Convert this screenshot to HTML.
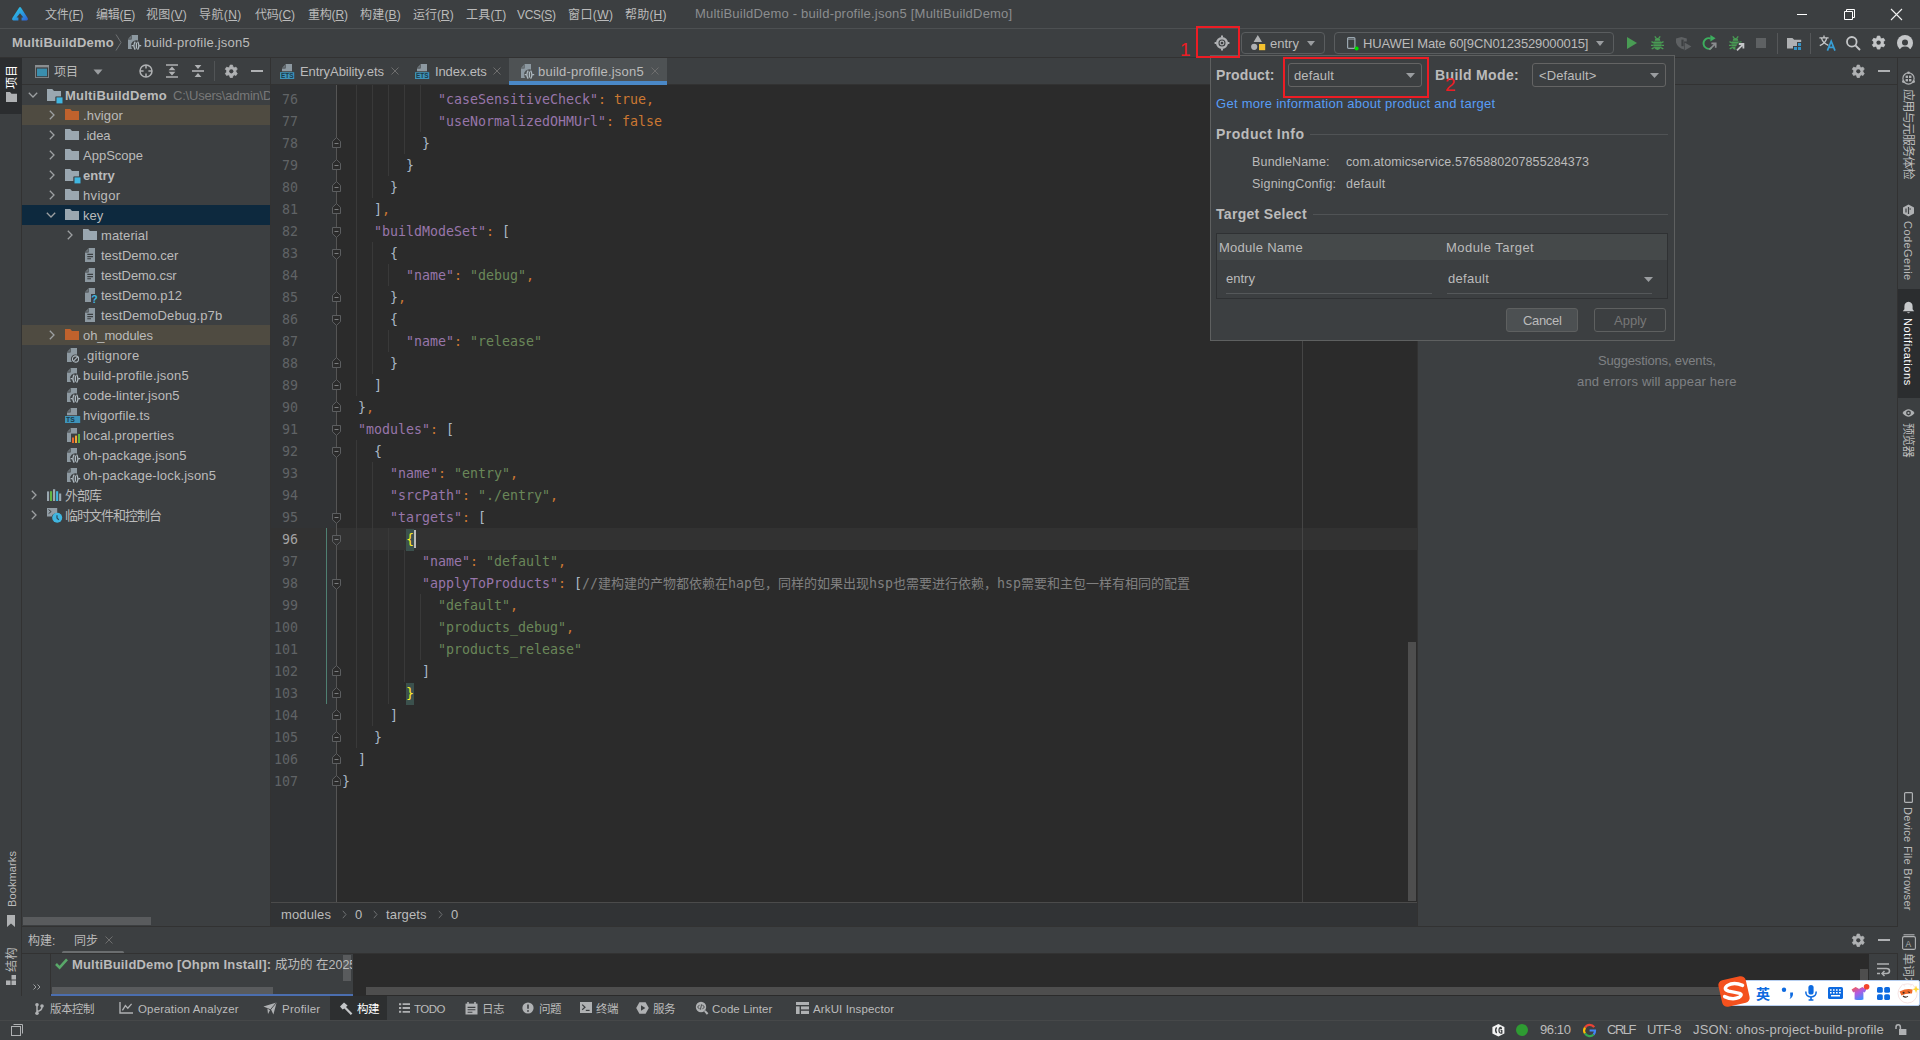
<!DOCTYPE html>
<html lang="zh"><head><meta charset="utf-8"><title>MultiBuildDemo - build-profile.json5</title>
<style>
*{box-sizing:border-box;margin:0;padding:0}
html,body{width:1920px;height:1040px;overflow:hidden;background:#3c3f41}
body{position:relative;font-family:"Liberation Sans","Noto Sans CJK SC",sans-serif;font-size:12px;color:#bbbbbb}
.a{position:absolute}
.t{position:absolute;white-space:pre;height:20px;line-height:20px}
.b{font-weight:bold}
svg{position:absolute;overflow:visible}
.code{position:absolute;white-space:pre;font-family:"DejaVu Sans Mono","Liberation Mono","Noto Sans CJK SC",monospace;font-size:13.29px;height:22px;line-height:22px;color:#a9b7c6}
.k{color:#9876aa}.s{color:#6a8759}.o{color:#cc7832}.c{color:#808080}
.cj{font-size:13px}
.ln{position:absolute;font-family:"DejaVu Sans Mono","Liberation Mono",monospace;font-size:13.29px;height:22px;line-height:22px;color:#606366;text-align:right;width:40px}
.vt{position:absolute;white-space:pre;height:20px;line-height:20px;transform-origin:0 0}
</style></head><body>
<div class="a" style="left:0px;top:0px;width:1920px;height:28px;background:#3c3f41;"></div>
<div class="a" style="left:0px;top:28px;width:1920px;height:1px;background:#4d5052;"></div>
<svg style="left:12px;top:7px" width="16" height="14" viewBox="0 0 16 14"><defs><linearGradient id="lg1" x1="0" y1="0" x2="1" y2="1"><stop offset="0" stop-color="#35d6e8"></stop><stop offset="0.55" stop-color="#2a9be0"></stop><stop offset="1" stop-color="#2f5fd8"></stop></linearGradient></defs><path d="M7.2 0.6 Q8 -0.4 8.9 0.6 L15.8 11.2 Q16.4 13.4 14.4 13.4 L9.6 13.4 L9.6 10.4 L11.4 10.4 L8 6.2 L4.6 10.4 L6.4 10.4 L6.4 13.4 L1.6 13.4 Q-0.4 13.4 0.2 11.2 Z" fill="url(#lg1)"></path></svg>
<span class="t" style="left: 45px; top: 5px; font-size: 12px; color: rgb(187, 187, 187); letter-spacing: -0.2px;">文件(<u>F</u>)</span>
<span class="t" style="left: 96px; top: 5px; font-size: 12px; color: rgb(187, 187, 187); letter-spacing: -0.2px;">编辑(<u>E</u>)</span>
<span class="t" style="left: 146px; top: 5px; font-size: 12px; color: rgb(187, 187, 187); letter-spacing: 0.2px;">视图(<u>V</u>)</span>
<span class="t" style="left: 199px; top: 5px; font-size: 12px; color: rgb(187, 187, 187); letter-spacing: 0.4px;">导航(<u>N</u>)</span>
<span class="t" style="left: 255px; top: 5px; font-size: 12px; color: rgb(187, 187, 187); letter-spacing: -0.2px;">代码(<u>C</u>)</span>
<span class="t" style="left: 308px; top: 5px; font-size: 12px; color: rgb(187, 187, 187); letter-spacing: -0.2px;">重构(<u>R</u>)</span>
<span class="t" style="left: 360px; top: 5px; font-size: 12px; color: rgb(187, 187, 187); letter-spacing: 0.2px;">构建(<u>B</u>)</span>
<span class="t" style="left: 413px; top: 5px; font-size: 12px; color: rgb(187, 187, 187); letter-spacing: 0px;">运行(<u>R</u>)</span>
<span class="t" style="left: 466px; top: 5px; font-size: 12px; color: rgb(187, 187, 187); letter-spacing: 0.2px;">工具(<u>T</u>)</span>
<span class="t" style="left: 517px; top: 5px; font-size: 12px; color: rgb(187, 187, 187); letter-spacing: -0.333px;">VCS(<u>S</u>)</span>
<span class="t" style="left: 568px; top: 5px; font-size: 12px; color: rgb(187, 187, 187); letter-spacing: 0.4px;">窗口(<u>W</u>)</span>
<span class="t" style="left: 625px; top: 5px; font-size: 12px; color: rgb(187, 187, 187); letter-spacing: 0.2px;">帮助(<u>H</u>)</span>
<span class="t " style="left: 695px; top: 4px; font-size: 13px; color: rgb(139, 141, 143); letter-spacing: 0.208px;">MultiBuildDemo - build-profile.json5 [MultiBuildDemo]</span>
<svg style="left:1795px;top:5px" width="110" height="18" viewBox="0 0 110 18"><path d="M2 9.5 H12" stroke="#ffffff" stroke-width="1"></path><path d="M49.5 6.5 H57.5 V14.5 H49.5 Z M51.5 6.5 V4.5 H59.5 V12.5 H57.5" fill="none" stroke="#ffffff" stroke-width="1"></path><path d="M96 4 L107 15 M107 4 L96 15" stroke="#f0f0f0" stroke-width="1.1"></path></svg>
<div class="a" style="left:0px;top:29px;width:1920px;height:28px;background:#3c3f41;"></div>
<div class="a" style="left:0px;top:57px;width:1920px;height:1px;background:#323232;"></div>
<span class="t " style="left: 12px; top: 33px; font-size: 13px; color: rgb(187, 187, 187); font-weight: bold; letter-spacing: 0.214px;">MultiBuildDemo</span>
<svg style="left:115px;top:34px" width="8" height="17" viewBox="0 0 8 17"><path d="M1 0.5 L6 8.5 L1 16.5" fill="none" stroke="#6e7072" stroke-width="1"></path></svg>
<svg style="left:128px;top:35px" width="14" height="16" viewBox="0 0 14 16"><path d="M3.6 0 H10 V14 H0 V4.6 H3.6 Z" fill="#8d99a1"></path><path d="M0 3.8 L3 0.8 V3.8 Z" fill="#8d99a1" opacity="0.6"></path><ellipse cx="8.4" cy="10.6" rx="5.4" ry="5.4" fill="#3c3f41"></ellipse><path d="M7.2 6.6 Q4.6 10.6 7.2 14.6 M9.6 6.6 Q12.2 10.6 9.6 14.6" fill="none" stroke="#aeb9c0" stroke-width="1.3"></path><path d="M8.4 7.6 V13.6" stroke="#aeb9c0" stroke-width="1.3"></path><path d="M3.6 10.6 L5.6 10.6 M11.2 10.6 L13.2 10.6" stroke="#aeb9c0" stroke-width="1.3"></path></svg>
<span class="t " style="left: 144px; top: 33px; font-size: 13px; color: rgb(187, 187, 187); letter-spacing: 0.211px;">build-profile.json5</span>
<svg style="left:1214px;top:35px" width="16" height="16" viewBox="0 0 16 16"><circle cx="8" cy="8" r="4.8" fill="none" stroke="#afb1b3" stroke-width="2.5"></circle><circle cx="8" cy="8" r="1.9" fill="none" stroke="#afb1b3" stroke-width="1.1"></circle><path d="M8 0.6 V2.6 M8 13.4 V15.4 M0.6 8 H2.6 M13.4 8 H15.4" stroke="#afb1b3" stroke-width="2"></path></svg>
<div class="a" style="left:1241px;top:32px;width:84px;height:22px;background:#3c3f41;border:1px solid #5a5d5f;border-radius:4px"></div>
<svg style="left:1251px;top:35px" width="15" height="16" viewBox="0 0 15 16"><path d="M6.8 0 L11 7 H2.6 Z" fill="#afb1b3"></path><circle cx="3.2" cy="11.8" r="3.1" fill="#afb1b3"></circle><rect x="8" y="9" width="6.2" height="6.2" fill="#f4c12e"></rect></svg>
<span class="t " style="left: 1270px; top: 34px; font-size: 13px; color: rgb(187, 187, 187); letter-spacing: 0px;">entry</span>
<svg style="left:1307px;top:41px" width="8" height="5" viewBox="0 0 8 5"><path d="M0 0 H8 L4 5 Z" fill="#9a9da0"></path></svg>
<div class="a" style="left:1334px;top:32px;width:280px;height:22px;background:#3c3f41;border:1px solid #5a5d5f;border-radius:4px"></div>
<svg style="left:1347px;top:37px" width="12" height="14" viewBox="0 0 12 14"><rect x="0.6" y="0.6" width="7.3" height="10.8" rx="1" fill="#3c3f41" stroke="#9aa7b0" stroke-width="1.2"></rect><path d="M0.6 2.2 H8" stroke="#9aa7b0" stroke-width="0.8"></path><circle cx="9.6" cy="11.6" r="2" fill="#00dd00"></circle></svg>
<span class="t " style="left: 1363px; top: 34px; font-size: 13px; color: rgb(187, 187, 187); letter-spacing: -0.125px;">HUAWEI Mate 60[9CN0123529000015]</span>
<svg style="left:1596px;top:41px" width="8" height="5" viewBox="0 0 8 5"><path d="M0 0 H8 L4 5 Z" fill="#9a9da0"></path></svg>
<svg style="left:1627px;top:37px" width="10" height="12" viewBox="0 0 10 12"><path d="M0 0 L10 6 L0 12 Z" fill="#499c54"></path></svg>
<svg style="left:1650.5px;top:36px" width="13" height="14" viewBox="0 0 13 14"><path d="M3.8 0.3 L5.5 2.6 M9.2 0.3 L7.5 2.6" stroke="#499c54" stroke-width="1.3"></path><path d="M3.8 4.7 Q3.8 1.9 6.5 1.9 Q9.2 1.9 9.2 4.7 Z" fill="#499c54"></path><path d="M2.7 5.5 H10.3 Q11 9 10 11.6 Q8.6 13.9 6.5 13.9 Q4.4 13.9 3 11.6 Q2 9 2.7 5.5 Z" fill="#499c54"></path><path d="M2.8 6.9 L0.5 5.7 M2.5 9.3 H0 M3 11.6 L0.7 12.9 M10.2 6.9 L12.5 5.7 M10.5 9.3 H13 M10 11.6 L12.3 12.9" stroke="#499c54" stroke-width="1.3"></path><path d="M2.4 8 H10.6 M2.6 10.6 H10.4" stroke="#3c3f41" stroke-width="0.7" opacity="0.85"></path></svg>
<svg style="left:1676px;top:37px" width="16" height="14" viewBox="0 0 16 14"><path d="M0 1.6 L5.4 0 L10.8 1.6 V4.4 H8 V12.6 Q1.4 10.4 0 5.4 Z" fill="#5e6163"></path><rect x="5.4" y="2.6" width="2.2" height="6.6" fill="#3c3f41"></rect><path d="M8.6 5.4 L15.4 9.4 L8.6 13.6 Z" fill="#5e6163"></path></svg>
<svg style="left:1702px;top:35px" width="15" height="16" viewBox="0 0 15 16"><path d="M8.6 3.5 A5.3 5.3 0 1 0 9.6 13" fill="none" stroke="#3dae5e" stroke-width="1.9"></path><path d="M8.4 0 L13.6 3.3 L8.4 6.4 Z" fill="#3dae5e"></path><path d="M7.4 14.6 L13 9 M9.4 8.4 H13.7 V12.7" fill="none" stroke="#8a8d8f" stroke-width="1.7"></path></svg>
<svg style="left:1728.6px;top:36px" width="13" height="14" viewBox="0 0 13 14"><path d="M3.8 0.3 L5.5 2.6 M9.2 0.3 L7.5 2.6" stroke="#499c54" stroke-width="1.3"></path><path d="M3.8 4.7 Q3.8 1.9 6.5 1.9 Q9.2 1.9 9.2 4.7 Z" fill="#499c54"></path><path d="M2.7 5.5 H10.3 Q11 9 10 11.6 Q8.6 13.9 6.5 13.9 Q4.4 13.9 3 11.6 Q2 9 2.7 5.5 Z" fill="#499c54"></path><path d="M2.8 6.9 L0.5 5.7 M2.5 9.3 H0 M3 11.6 L0.7 12.9 M10.2 6.9 L12.5 5.7 M10.5 9.3 H13 M10 11.6 L12.3 12.9" stroke="#499c54" stroke-width="1.3"></path><path d="M2.4 8 H10.6 M2.6 10.6 H10.4" stroke="#3c3f41" stroke-width="0.7" opacity="0.85"></path></svg>
<svg style="left:1729px;top:36px" width="16" height="15" viewBox="0 0 16 15"><path d="M6.4 15 L6.4 11.4 L9.4 6.6 L16 6.6 L16 15 Z" fill="#3c3f41"></path><path d="M8 14.4 L13.8 8.6 M9.8 8 H14.4 V12.6" fill="none" stroke="#c4c6c8" stroke-width="1.8"></path></svg>
<div class="a" style="left:1756px;top:38px;width:10px;height:10px;background:#5e6163;"></div>
<div class="a" style="left:1777px;top:33px;width:1px;height:21px;background:#555759;"></div>
<svg style="left:1787px;top:38px" width="15" height="13" viewBox="0 0 15 13"><path d="M0 0 H5.4 L7.2 1.8 H14.2 V4 H10 V8 H6 V10.4 H0 Z" fill="#afb1b3"></path><rect x="11" y="5" width="3" height="3" fill="#3592c4"></rect><rect x="7" y="9" width="3" height="3" fill="#3592c4"></rect><rect x="11" y="9" width="3" height="3" fill="#3592c4"></rect></svg>
<div class="a" style="left:1810px;top:33px;width:1px;height:21px;background:#555759;"></div>
<svg style="left:1819px;top:35px" width="17" height="16" viewBox="0 0 17 16"><path d="M0.4 2.8 H9.6 M5 0.6 V2.8 M7.8 2.8 Q6.6 8 0.8 10.6 M2.4 2.8 Q3.8 8 9.4 10.4" fill="none" stroke="#c4c6c8" stroke-width="1.3"></path><path d="M8.4 15.6 L12.2 6.2 L16 15.6 M9.8 12.4 H14.6" fill="none" stroke="#389fd6" stroke-width="1.7"></path></svg>
<svg style="left:1845px;top:35px" width="16" height="16" viewBox="0 0 16 16"><circle cx="6.8" cy="6.8" r="4.8" fill="none" stroke="#c4c6c8" stroke-width="1.8"></circle><path d="M10.4 10.4 L15 15" stroke="#c4c6c8" stroke-width="2"></path></svg>
<svg style="left:1871.4px;top:35.4px" width="15.2" height="15.2" viewBox="0 0 15.2 15.2"><polygon points="5.93,3.01 6.34,1.12 8.86,1.12 9.27,3.01 10.74,3.86 12.58,3.27 13.84,5.45 12.41,6.75 12.41,8.45 13.84,9.75 12.58,11.93 10.74,11.34 9.27,12.19 8.86,14.08 6.34,14.08 5.93,12.19 4.46,11.34 2.62,11.93 1.36,9.75 2.79,8.45 2.79,6.75 1.36,5.45 2.62,3.27 4.46,3.86" fill="#c4c6c8" stroke="#c4c6c8" stroke-width="0.8" stroke-linejoin="round"></polygon><circle cx="7.6" cy="7.6" r="2.18" fill="#3c3f41"></circle></svg>
<svg style="left:1897px;top:34.5px" width="16" height="16" viewBox="0 0 16 16"><circle cx="8" cy="8" r="8" fill="#c4c6c8"></circle><circle cx="8" cy="7.4" r="3" fill="#3c3f41"></circle><path d="M2.4 16.4 Q3 11.6 8 11.6 Q13 11.6 13.6 16.4 Z" fill="#3c3f41"></path></svg>
<div class="a" style="left:0px;top:58px;width:22px;height:962px;background:#3c3f41;"></div>
<div class="a" style="left:21px;top:58px;width:1px;height:938px;background:#323232;"></div>
<div class="a" style="left:0px;top:58px;width:22px;height:56px;background:#2b2d2f;"></div>
<span class="vt" style="left: 2px; top: 89px; font-size: 12px; color: rgb(255, 255, 255); transform: rotate(-90deg); letter-spacing: 0px;">项目</span>
<svg style="left:6px;top:92px" width="11" height="10" viewBox="0 0 11 10"><path d="M0 0 H4 L5.5 1.8 H11 V10 H0 Z" fill="#afb1b3"></path></svg>
<span class="vt" style="left: 2px; top: 907px; font-size: 11px; color: rgb(187, 187, 187); transform: rotate(-90deg); letter-spacing: 0.111px;">Bookmarks</span>
<svg style="left:7px;top:915px" width="8" height="11" viewBox="0 0 8 11"><path d="M0 0 H8 V12 L4 8.5 L0 12 Z" fill="#afb1b3"></path></svg>
<span class="vt" style="left: 2px; top: 972px; font-size: 12px; color: rgb(187, 187, 187); transform: rotate(-90deg); letter-spacing: 0.5px;">结构</span>
<svg style="left:6px;top:975px" width="10" height="10" viewBox="0 0 10 10"><rect x="5.5" y="0" width="4.5" height="4.5" fill="#afb1b3"></rect><rect x="0" y="5.5" width="4.5" height="4.5" fill="#afb1b3"></rect><rect x="5.5" y="5.5" width="4.5" height="4.5" fill="#afb1b3"></rect></svg>
<div class="a" style="left:22px;top:58px;width:249px;height:869px;background:#3c3f41;"></div>
<div class="a" style="left:270px;top:58px;width:1px;height:869px;background:#323232;"></div>
<div class="a" style="left:22px;top:84px;width:248px;height:1px;background:#323232;"></div>
<svg style="left:35px;top:65px" width="14" height="13" viewBox="0 0 14 13"><rect x="0.5" y="0.5" width="13" height="12" fill="#3c3f41" stroke="#7d8184" stroke-width="1"></rect><rect x="0" y="0" width="14" height="2.4" fill="#8a8e91"></rect><rect x="2" y="3.6" width="10" height="7.6" fill="#3a8eae"></rect></svg>
<span class="t " style="left: 54px; top: 62px; font-size: 12px; color: rgb(187, 187, 187); letter-spacing: 0px;">项目</span>
<svg style="left:93px;top:69px" width="10" height="6" viewBox="0 0 10 6"><path d="M0.5 0.5 H9.5 L5 5.8 Z" fill="#9a9da0"></path></svg>
<svg style="left:139px;top:64px" width="14" height="14" viewBox="0 0 14 14"><circle cx="7" cy="7" r="6" fill="none" stroke="#afb1b3" stroke-width="1.5"></circle><path d="M7 1 V4.6 M7 9.4 V13 M1 7 H4.6 M9.4 7 H13" stroke="#afb1b3" stroke-width="1.5"></path></svg>
<svg style="left:166px;top:64px" width="12" height="14" viewBox="0 0 12 14"><path d="M0 1 H12 M0 13 H12" stroke="#afb1b3" stroke-width="1.6"></path><path d="M6 2.6 L9.4 6.2 H2.6 Z M6 11.4 L9.4 7.8 H2.6 Z" fill="#afb1b3"></path></svg>
<svg style="left:192px;top:64px" width="12" height="14" viewBox="0 0 12 14"><path d="M0 7 H12" stroke="#afb1b3" stroke-width="1.6"></path><path d="M6 5 L9.4 1 H2.6 Z M6 9 L9.4 13 H2.6 Z" fill="#afb1b3"></path></svg>
<div class="a" style="left:214px;top:61px;width:1px;height:20px;background:#515456;"></div>
<svg style="left:223.7px;top:63.7px" width="14.6" height="14.6" viewBox="0 0 14.6 14.6"><polygon points="5.71,2.92 6.10,1.12 8.50,1.12 8.89,2.92 10.30,3.73 12.05,3.17 13.26,5.25 11.89,6.49 11.89,8.11 13.26,9.35 12.05,11.43 10.30,10.87 8.89,11.68 8.50,13.48 6.10,13.48 5.71,11.68 4.30,10.87 2.55,11.43 1.34,9.35 2.71,8.11 2.71,6.49 1.34,5.25 2.55,3.17 4.30,3.73" fill="#afb1b3" stroke="#afb1b3" stroke-width="0.8" stroke-linejoin="round"></polygon><circle cx="7.3" cy="7.3" r="2.08" fill="#3c3f41"></circle></svg>
<div class="a" style="left:251.0px;top:70px;width:12px;height:2px;background:#afb1b3;"></div>
<svg style="left:28px;top:92px" width="10" height="6" viewBox="0 0 10 6"><path d="M0.8 0.8 L5 5 L9.2 0.8" fill="none" stroke="#9da0a2" stroke-width="1.3"></path></svg>
<svg style="left:47px;top:89px" width="16" height="15" viewBox="0 0 16 15"><path d="M0 0 H5.2 L7 2 H14 V8 H8.5 V12 H0 Z" fill="#9aa7b0"></path><rect x="8.6" y="7.4" width="7.4" height="7.6" fill="#3c3f41"></rect><rect x="9.5" y="8.4" width="6" height="6" fill="#40b6e0"></rect></svg>
<span class="t " style="left: 65px; top: 86px; font-size: 13px; color: rgb(187, 187, 187); font-weight: bold; letter-spacing: 0.214px;">MultiBuildDemo</span>
<div class="a" style="left:173px;top:85px;width:97px;height:20px;overflow:hidden"><span class="t" style="left: 0px; top: 1px; font-size: 13px; color: rgb(120, 120, 120); letter-spacing: -0.211px;">C:\Users\admin\Deve</span></div>
<div class="a" style="left:22px;top:105px;width:248px;height:20px;background:#4f4b41;"></div>
<svg style="left:48.6px;top:110px" width="6" height="10" viewBox="0 0 6 10"><path d="M0.8 0.8 L5 5 L0.8 9.2" fill="none" stroke="#9da0a2" stroke-width="1.3"></path></svg>
<svg style="left:65px;top:109px" width="14" height="11" viewBox="0 0 14 11"><path d="M0 0 H5.2 L7 2 H14 V11 H0 Z" fill="#c0622d"></path></svg>
<span class="t " style="left: 83px; top: 106px; font-size: 13px; color: rgb(187, 187, 187); letter-spacing: 0.143px;">.hvigor</span>
<svg style="left:48.6px;top:130px" width="6" height="10" viewBox="0 0 6 10"><path d="M0.8 0.8 L5 5 L0.8 9.2" fill="none" stroke="#9da0a2" stroke-width="1.3"></path></svg>
<svg style="left:65px;top:129px" width="14" height="11" viewBox="0 0 14 11"><path d="M0 0 H5.2 L7 2 H14 V11 H0 Z" fill="#9aa7b0"></path></svg>
<span class="t " style="left: 83px; top: 126px; font-size: 13px; color: rgb(187, 187, 187); letter-spacing: -0.2px;">.idea</span>
<svg style="left:48.6px;top:150px" width="6" height="10" viewBox="0 0 6 10"><path d="M0.8 0.8 L5 5 L0.8 9.2" fill="none" stroke="#9da0a2" stroke-width="1.3"></path></svg>
<svg style="left:65px;top:149px" width="14" height="11" viewBox="0 0 14 11"><path d="M0 0 H5.2 L7 2 H14 V11 H0 Z" fill="#9aa7b0"></path></svg>
<span class="t " style="left: 83px; top: 146px; font-size: 13px; color: rgb(187, 187, 187); letter-spacing: 0px;">AppScope</span>
<svg style="left:48.6px;top:170px" width="6" height="10" viewBox="0 0 6 10"><path d="M0.8 0.8 L5 5 L0.8 9.2" fill="none" stroke="#9da0a2" stroke-width="1.3"></path></svg>
<svg style="left:65px;top:169px" width="16" height="15" viewBox="0 0 16 15"><path d="M0 0 H5.2 L7 2 H14 V8 H8.5 V12 H0 Z" fill="#9aa7b0"></path><rect x="8.6" y="7.4" width="7.4" height="7.6" fill="#3c3f41"></rect><rect x="9.5" y="8.4" width="6" height="6" fill="#40b6e0"></rect></svg>
<span class="t " style="left: 83px; top: 166px; font-size: 13px; color: rgb(187, 187, 187); font-weight: bold; letter-spacing: 0px;">entry</span>
<svg style="left:48.6px;top:190px" width="6" height="10" viewBox="0 0 6 10"><path d="M0.8 0.8 L5 5 L0.8 9.2" fill="none" stroke="#9da0a2" stroke-width="1.3"></path></svg>
<svg style="left:65px;top:189px" width="14" height="11" viewBox="0 0 14 11"><path d="M0 0 H5.2 L7 2 H14 V11 H0 Z" fill="#9aa7b0"></path></svg>
<span class="t " style="left: 83px; top: 186px; font-size: 13px; color: rgb(187, 187, 187); letter-spacing: 0.333px;">hvigor</span>
<div class="a" style="left:22px;top:205px;width:248px;height:20px;background:#0d293e;"></div>
<svg style="left:46px;top:212px" width="10" height="6" viewBox="0 0 10 6"><path d="M0.8 0.8 L5 5 L9.2 0.8" fill="none" stroke="#9da0a2" stroke-width="1.3"></path></svg>
<svg style="left:65px;top:209px" width="14" height="11" viewBox="0 0 14 11"><path d="M0 0 H5.2 L7 2 H14 V11 H0 Z" fill="#9aa7b0"></path></svg>
<span class="t " style="left: 83px; top: 206px; font-size: 13px; color: rgb(187, 187, 187); letter-spacing: 0px;">key</span>
<svg style="left:66.6px;top:230px" width="6" height="10" viewBox="0 0 6 10"><path d="M0.8 0.8 L5 5 L0.8 9.2" fill="none" stroke="#9da0a2" stroke-width="1.3"></path></svg>
<svg style="left:83px;top:229px" width="14" height="11" viewBox="0 0 14 11"><path d="M0 0 H5.2 L7 2 H14 V11 H0 Z" fill="#9aa7b0"></path></svg>
<span class="t " style="left: 101px; top: 226px; font-size: 13px; color: rgb(187, 187, 187); letter-spacing: 0.125px;">material</span>
<svg style="left:85px;top:248px" width="10" height="14" viewBox="0 0 10 14"><path d="M3.6 0 H10 V14 H0 V4.6 H3.6 Z" fill="#8d99a1"></path><path d="M0 3.8 L3 0.8 V3.8 Z" fill="#8d99a1" opacity="0.6"></path><path d="M2.3 6.4 H8 M2.3 8.6 H8 M2.3 10.8 H6" stroke="#3c3f41" stroke-width="1.1"></path></svg>
<span class="t " style="left: 101px; top: 246px; font-size: 13px; color: rgb(187, 187, 187); letter-spacing: 0px;">testDemo.cer</span>
<svg style="left:85px;top:268px" width="10" height="14" viewBox="0 0 10 14"><path d="M3.6 0 H10 V14 H0 V4.6 H3.6 Z" fill="#8d99a1"></path><path d="M0 3.8 L3 0.8 V3.8 Z" fill="#8d99a1" opacity="0.6"></path><path d="M2.3 6.4 H8 M2.3 8.6 H8 M2.3 10.8 H6" stroke="#3c3f41" stroke-width="1.1"></path></svg>
<span class="t " style="left: 101px; top: 266px; font-size: 13px; color: rgb(187, 187, 187); letter-spacing: -0.083px;">testDemo.csr</span>
<svg style="left:85px;top:288px" width="14" height="15" viewBox="0 0 14 15"><path d="M3.6 0 H10 V14 H0 V4.6 H3.6 Z" fill="#8d99a1"></path><path d="M0 3.8 L3 0.8 V3.8 Z" fill="#8d99a1" opacity="0.6"></path><rect x="6" y="6" width="6" height="9" fill="#3c3f41"></rect><text x="6.2" y="14.8" font-family="Liberation Sans" font-weight="bold" font-size="10.5" fill="#40b6e0">?</text></svg>
<span class="t " style="left: 101px; top: 286px; font-size: 13px; color: rgb(187, 187, 187); letter-spacing: 0px;">testDemo.p12</span>
<svg style="left:85px;top:308px" width="10" height="14" viewBox="0 0 10 14"><path d="M3.6 0 H10 V14 H0 V4.6 H3.6 Z" fill="#8d99a1"></path><path d="M0 3.8 L3 0.8 V3.8 Z" fill="#8d99a1" opacity="0.6"></path><path d="M2.3 6.4 H8 M2.3 8.6 H8 M2.3 10.8 H6" stroke="#3c3f41" stroke-width="1.1"></path></svg>
<span class="t " style="left: 101px; top: 306px; font-size: 13px; color: rgb(187, 187, 187); letter-spacing: 0.118px;">testDemoDebug.p7b</span>
<div class="a" style="left:22px;top:325px;width:248px;height:20px;background:#4f4b41;"></div>
<svg style="left:48.6px;top:330px" width="6" height="10" viewBox="0 0 6 10"><path d="M0.8 0.8 L5 5 L0.8 9.2" fill="none" stroke="#9da0a2" stroke-width="1.3"></path></svg>
<svg style="left:65px;top:329px" width="14" height="11" viewBox="0 0 14 11"><path d="M0 0 H5.2 L7 2 H14 V11 H0 Z" fill="#c0622d"></path></svg>
<span class="t " style="left: 83px; top: 326px; font-size: 13px; color: rgb(187, 187, 187); letter-spacing: -0.1px;">oh_modules</span>
<svg style="left:67px;top:348px" width="14" height="15" viewBox="0 0 14 15"><path d="M3.6 0 H10 V14 H0 V4.6 H3.6 Z" fill="#8d99a1"></path><path d="M0 3.8 L3 0.8 V3.8 Z" fill="#8d99a1" opacity="0.6"></path><circle cx="8.5" cy="11" r="4.6" fill="#3c3f41"></circle><circle cx="8.5" cy="11" r="3.1" fill="none" stroke="#aeb9c0" stroke-width="1.1"></circle><path d="M6.4 13.1 L10.6 8.9" stroke="#aeb9c0" stroke-width="1.1"></path></svg>
<span class="t " style="left: 83px; top: 346px; font-size: 13px; color: rgb(187, 187, 187); letter-spacing: 0.3px;">.gitignore</span>
<svg style="left:67px;top:368px" width="14" height="16" viewBox="0 0 14 16"><path d="M3.6 0 H10 V14 H0 V4.6 H3.6 Z" fill="#8d99a1"></path><path d="M0 3.8 L3 0.8 V3.8 Z" fill="#8d99a1" opacity="0.6"></path><ellipse cx="8.4" cy="10.6" rx="5.4" ry="5.4" fill="#3c3f41"></ellipse><path d="M7.2 6.6 Q4.6 10.6 7.2 14.6 M9.6 6.6 Q12.2 10.6 9.6 14.6" fill="none" stroke="#aeb9c0" stroke-width="1.3"></path><path d="M8.4 7.6 V13.6" stroke="#aeb9c0" stroke-width="1.3"></path><path d="M3.6 10.6 L5.6 10.6 M11.2 10.6 L13.2 10.6" stroke="#aeb9c0" stroke-width="1.3"></path></svg>
<span class="t " style="left: 83px; top: 366px; font-size: 13px; color: rgb(187, 187, 187); letter-spacing: 0.211px;">build-profile.json5</span>
<svg style="left:67px;top:388px" width="14" height="16" viewBox="0 0 14 16"><path d="M3.6 0 H10 V14 H0 V4.6 H3.6 Z" fill="#8d99a1"></path><path d="M0 3.8 L3 0.8 V3.8 Z" fill="#8d99a1" opacity="0.6"></path><ellipse cx="8.4" cy="10.6" rx="5.4" ry="5.4" fill="#3c3f41"></ellipse><path d="M7.2 6.6 Q4.6 10.6 7.2 14.6 M9.6 6.6 Q12.2 10.6 9.6 14.6" fill="none" stroke="#aeb9c0" stroke-width="1.3"></path><path d="M8.4 7.6 V13.6" stroke="#aeb9c0" stroke-width="1.3"></path><path d="M3.6 10.6 L5.6 10.6 M11.2 10.6 L13.2 10.6" stroke="#aeb9c0" stroke-width="1.3"></path></svg>
<span class="t " style="left: 83px; top: 386px; font-size: 13px; color: rgb(187, 187, 187); letter-spacing: 0.118px;">code-linter.json5</span>
<svg style="left:65px;top:408px" width="16" height="15" viewBox="0 0 16 15"><path d="M5.6 0 H12 V7.2 H2 V4.6 H5.6 Z" fill="#8d99a1"></path><path d="M2 3.8 L5 0.8 V3.8 Z" fill="#8d99a1" opacity="0.6"></path><rect x="0" y="8" width="15.2" height="7" fill="#3e93b9"></rect><text x="1" y="14" font-family="Liberation Sans" font-weight="bold" font-size="6.8" fill="#1b3a4a">TS</text></svg>
<span class="t " style="left: 83px; top: 406px; font-size: 13px; color: rgb(187, 187, 187); letter-spacing: 0.077px;">hvigorfile.ts</span>
<svg style="left:67px;top:428px" width="15" height="16" viewBox="0 0 15 16"><path d="M3.6 0 H10 V14 H0 V4.6 H3.6 Z" fill="#8d99a1"></path><path d="M0 3.8 L3 0.8 V3.8 Z" fill="#8d99a1" opacity="0.6"></path><rect x="4" y="5.6" width="10" height="10" fill="#3c3f41"></rect><rect x="5" y="9.5" width="2" height="5.5" fill="#e8682e"></rect><rect x="8" y="7.6" width="2" height="7.4" fill="#f0a732"></rect><rect x="11" y="6" width="2" height="9" fill="#62b543"></rect></svg>
<span class="t " style="left: 83px; top: 426px; font-size: 13px; color: rgb(187, 187, 187); letter-spacing: 0.188px;">local.properties</span>
<svg style="left:67px;top:448px" width="14" height="16" viewBox="0 0 14 16"><path d="M3.6 0 H10 V14 H0 V4.6 H3.6 Z" fill="#8d99a1"></path><path d="M0 3.8 L3 0.8 V3.8 Z" fill="#8d99a1" opacity="0.6"></path><ellipse cx="8.4" cy="10.6" rx="5.4" ry="5.4" fill="#3c3f41"></ellipse><path d="M7.2 6.6 Q4.6 10.6 7.2 14.6 M9.6 6.6 Q12.2 10.6 9.6 14.6" fill="none" stroke="#aeb9c0" stroke-width="1.3"></path><path d="M8.4 7.6 V13.6" stroke="#aeb9c0" stroke-width="1.3"></path><path d="M3.6 10.6 L5.6 10.6 M11.2 10.6 L13.2 10.6" stroke="#aeb9c0" stroke-width="1.3"></path></svg>
<span class="t " style="left: 83px; top: 446px; font-size: 13px; color: rgb(187, 187, 187); letter-spacing: 0.063px;">oh-package.json5</span>
<svg style="left:67px;top:468px" width="14" height="16" viewBox="0 0 14 16"><path d="M3.6 0 H10 V14 H0 V4.6 H3.6 Z" fill="#8d99a1"></path><path d="M0 3.8 L3 0.8 V3.8 Z" fill="#8d99a1" opacity="0.6"></path><ellipse cx="8.4" cy="10.6" rx="5.4" ry="5.4" fill="#3c3f41"></ellipse><path d="M7.2 6.6 Q4.6 10.6 7.2 14.6 M9.6 6.6 Q12.2 10.6 9.6 14.6" fill="none" stroke="#aeb9c0" stroke-width="1.3"></path><path d="M8.4 7.6 V13.6" stroke="#aeb9c0" stroke-width="1.3"></path><path d="M3.6 10.6 L5.6 10.6 M11.2 10.6 L13.2 10.6" stroke="#aeb9c0" stroke-width="1.3"></path></svg>
<span class="t " style="left: 83px; top: 466px; font-size: 13px; color: rgb(187, 187, 187); letter-spacing: 0.143px;">oh-package-lock.json5</span>
<svg style="left:30.6px;top:490px" width="6" height="10" viewBox="0 0 6 10"><path d="M0.8 0.8 L5 5 L0.8 9.2" fill="none" stroke="#9da0a2" stroke-width="1.3"></path></svg>
<svg style="left:47px;top:489px" width="15" height="12" viewBox="0 0 15 12"><rect x="0" y="2.4" width="2.1" height="9.6" fill="#9aa7b0"></rect><rect x="3" y="2.2" width="2.1" height="9.8" fill="#62b543"></rect><rect x="6" y="0.2" width="2.2" height="11.8" fill="#9aa7b0"></rect><rect x="9.1" y="2.2" width="2.1" height="9.8" fill="#40b6e0"></rect><rect x="12.1" y="4.5" width="2.1" height="7.5" fill="#9aa7b0"></rect></svg>
<span class="t " style="left: 65px; top: 486px; font-size: 13px; color: rgb(187, 187, 187); letter-spacing: -1px;">外部库</span>
<svg style="left:30.6px;top:510px" width="6" height="10" viewBox="0 0 6 10"><path d="M0.8 0.8 L5 5 L0.8 9.2" fill="none" stroke="#9da0a2" stroke-width="1.3"></path></svg>
<svg style="left:47px;top:508px" width="16" height="16" viewBox="0 0 16 16"><path d="M0 0 H10.2 V5 Q5 5.6 4.8 8.6 H0 Z" fill="#9aa7b0" opacity="0.9"></path><path d="M1.6 1.6 L4.2 3.6 L1.6 5.6" fill="none" stroke="#3c3f41" stroke-width="1"></path><circle cx="10.2" cy="9.8" r="5" fill="#40b6e0"></circle><path d="M10 7.2 V10 L11.8 11.8" fill="none" stroke="#2b4a5a" stroke-width="1.2"></path></svg>
<span class="t " style="left: 65px; top: 506px; font-size: 13px; color: rgb(187, 187, 187); letter-spacing: -1px;">临时文件和控制台</span>
<div class="a" style="left:23px;top:917px;width:128px;height:8px;background:#595b5d;"></div>
<div class="a" style="left:271px;top:58px;width:1147px;height:27px;background:#3c3f41;"></div>
<div class="a" style="left:271px;top:84px;width:1147px;height:1px;background:#323232;"></div>
<svg style="left:280px;top:64px" width="16" height="15" viewBox="0 0 16 15"><path d="M5.6 0 H12 V7.2 H2 V4.6 H5.6 Z" fill="#8d99a1"></path><path d="M2 3.8 L5 0.8 V3.8 Z" fill="#8d99a1" opacity="0.6"></path><rect x="0" y="8.2" width="14.2" height="6.8" fill="#3e93b9"></rect><text x="1" y="14" font-family="Liberation Sans" font-weight="bold" font-size="6.5" fill="#1b3a4a" textLength="12.4" lengthAdjust="spacingAndGlyphs">ETS</text></svg>
<span class="t " style="left: 300px; top: 62px; font-size: 13px; color: rgb(187, 187, 187); letter-spacing: -0.063px;">EntryAbility.ets</span>
<svg style="left:391px;top:67px" width="8" height="8" viewBox="0 0 8 8"><path d="M0.5 0.5 L7.5 7.5 M7.5 0.5 L0.5 7.5" stroke="#6e6e6e" stroke-width="1"></path></svg>
<svg style="left:415px;top:64px" width="16" height="15" viewBox="0 0 16 15"><path d="M5.6 0 H12 V7.2 H2 V4.6 H5.6 Z" fill="#8d99a1"></path><path d="M2 3.8 L5 0.8 V3.8 Z" fill="#8d99a1" opacity="0.6"></path><rect x="0" y="8.2" width="14.2" height="6.8" fill="#3e93b9"></rect><text x="1" y="14" font-family="Liberation Sans" font-weight="bold" font-size="6.5" fill="#1b3a4a" textLength="12.4" lengthAdjust="spacingAndGlyphs">ETS</text></svg>
<span class="t " style="left: 435px; top: 62px; font-size: 13px; color: rgb(187, 187, 187); letter-spacing: -0.111px;">Index.ets</span>
<svg style="left:493px;top:67px" width="8" height="8" viewBox="0 0 8 8"><path d="M0.5 0.5 L7.5 7.5 M7.5 0.5 L0.5 7.5" stroke="#6e6e6e" stroke-width="1"></path></svg>
<div class="a" style="left:509px;top:58px;width:158px;height:27px;background:#4e5254;"></div>
<div class="a" style="left:509px;top:81px;width:158px;height:4px;background:#4a88c7;"></div>
<svg style="left:521px;top:64px" width="14" height="16" viewBox="0 0 14 16"><path d="M3.6 0 H10 V14 H0 V4.6 H3.6 Z" fill="#8d99a1"></path><path d="M0 3.8 L3 0.8 V3.8 Z" fill="#8d99a1" opacity="0.6"></path><ellipse cx="8.4" cy="10.6" rx="5.4" ry="5.4" fill="#4e5254"></ellipse><path d="M7.2 6.6 Q4.6 10.6 7.2 14.6 M9.6 6.6 Q12.2 10.6 9.6 14.6" fill="none" stroke="#aeb9c0" stroke-width="1.3"></path><path d="M8.4 7.6 V13.6" stroke="#aeb9c0" stroke-width="1.3"></path><path d="M3.6 10.6 L5.6 10.6 M11.2 10.6 L13.2 10.6" stroke="#aeb9c0" stroke-width="1.3"></path></svg>
<span class="t " style="left: 538px; top: 62px; font-size: 13px; color: rgb(187, 187, 187); letter-spacing: 0.211px;">build-profile.json5</span>
<svg style="left:651px;top:67px" width="8" height="8" viewBox="0 0 8 8"><path d="M0.5 0.5 L7.5 7.5 M7.5 0.5 L0.5 7.5" stroke="#6e6e6e" stroke-width="1"></path></svg>
<div class="a" style="left:271px;top:85px;width:1147px;height:817px;background:#2b2b2b;overflow:hidden">
<div class="a" style="left:0px;top:0px;width:66px;height:817px;background:#313335;"></div>
<div class="a" style="left:0px;top:443px;width:1147px;height:22px;background:#323232;"></div>
<div class="a" style="left:1031px;top:0px;width:1px;height:817px;background:#454545;"></div>
<div class="a" style="left:85px;top:-19px;width:1px;height:330px;background:#393939;"></div>
<div class="a" style="left:101px;top:-19px;width:1px;height:132px;background:#393939;"></div>
<div class="a" style="left:117px;top:-19px;width:1px;height:110px;background:#393939;"></div>
<div class="a" style="left:133px;top:-19px;width:1px;height:88px;background:#393939;"></div>
<div class="a" style="left:149px;top:-19px;width:1px;height:66px;background:#393939;"></div>
<div class="a" style="left:101px;top:157px;width:1px;height:132px;background:#393939;"></div>
<div class="a" style="left:117px;top:179px;width:1px;height:22px;background:#393939;"></div>
<div class="a" style="left:117px;top:245px;width:1px;height:22px;background:#393939;"></div>
<div class="a" style="left:85px;top:355px;width:1px;height:308px;background:#393939;"></div>
<div class="a" style="left:101px;top:377px;width:1px;height:264px;background:#393939;"></div>
<div class="a" style="left:117px;top:443px;width:1px;height:176px;background:#393939;"></div>
<div class="a" style="left:133px;top:465px;width:1px;height:132px;background:#393939;"></div>
<div class="a" style="left:149px;top:509px;width:1px;height:66px;background:#393939;"></div>
<div class="a" style="left:65px;top:0px;width:1px;height:817px;background:#555555;"></div>
<div class="a" style="left:55px;top:443px;width:1px;height:176px;background:#4f8072;"></div>
<svg style="left:61px;top:52px" width="9" height="11" viewBox="0 0 9 11"><path d="M0.5 10.5 V4.3 L4.5 0.6 L8.5 4.3 V10.5 Z" fill="#2b2b2b" stroke="#5c5e60" stroke-width="1"></path><path d="M2.5 6.5 H6.5" stroke="#7a7c7e" stroke-width="1"></path></svg>
<svg style="left:61px;top:74px" width="9" height="11" viewBox="0 0 9 11"><path d="M0.5 10.5 V4.3 L4.5 0.6 L8.5 4.3 V10.5 Z" fill="#2b2b2b" stroke="#5c5e60" stroke-width="1"></path><path d="M2.5 6.5 H6.5" stroke="#7a7c7e" stroke-width="1"></path></svg>
<svg style="left:61px;top:96px" width="9" height="11" viewBox="0 0 9 11"><path d="M0.5 10.5 V4.3 L4.5 0.6 L8.5 4.3 V10.5 Z" fill="#2b2b2b" stroke="#5c5e60" stroke-width="1"></path><path d="M2.5 6.5 H6.5" stroke="#7a7c7e" stroke-width="1"></path></svg>
<svg style="left:61px;top:118px" width="9" height="11" viewBox="0 0 9 11"><path d="M0.5 10.5 V4.3 L4.5 0.6 L8.5 4.3 V10.5 Z" fill="#2b2b2b" stroke="#5c5e60" stroke-width="1"></path><path d="M2.5 6.5 H6.5" stroke="#7a7c7e" stroke-width="1"></path></svg>
<svg style="left:61px;top:206px" width="9" height="11" viewBox="0 0 9 11"><path d="M0.5 10.5 V4.3 L4.5 0.6 L8.5 4.3 V10.5 Z" fill="#2b2b2b" stroke="#5c5e60" stroke-width="1"></path><path d="M2.5 6.5 H6.5" stroke="#7a7c7e" stroke-width="1"></path></svg>
<svg style="left:61px;top:272px" width="9" height="11" viewBox="0 0 9 11"><path d="M0.5 10.5 V4.3 L4.5 0.6 L8.5 4.3 V10.5 Z" fill="#2b2b2b" stroke="#5c5e60" stroke-width="1"></path><path d="M2.5 6.5 H6.5" stroke="#7a7c7e" stroke-width="1"></path></svg>
<svg style="left:61px;top:294px" width="9" height="11" viewBox="0 0 9 11"><path d="M0.5 10.5 V4.3 L4.5 0.6 L8.5 4.3 V10.5 Z" fill="#2b2b2b" stroke="#5c5e60" stroke-width="1"></path><path d="M2.5 6.5 H6.5" stroke="#7a7c7e" stroke-width="1"></path></svg>
<svg style="left:61px;top:316px" width="9" height="11" viewBox="0 0 9 11"><path d="M0.5 10.5 V4.3 L4.5 0.6 L8.5 4.3 V10.5 Z" fill="#2b2b2b" stroke="#5c5e60" stroke-width="1"></path><path d="M2.5 6.5 H6.5" stroke="#7a7c7e" stroke-width="1"></path></svg>
<svg style="left:61px;top:580px" width="9" height="11" viewBox="0 0 9 11"><path d="M0.5 10.5 V4.3 L4.5 0.6 L8.5 4.3 V10.5 Z" fill="#2b2b2b" stroke="#5c5e60" stroke-width="1"></path><path d="M2.5 6.5 H6.5" stroke="#7a7c7e" stroke-width="1"></path></svg>
<svg style="left:61px;top:602px" width="9" height="11" viewBox="0 0 9 11"><path d="M0.5 10.5 V4.3 L4.5 0.6 L8.5 4.3 V10.5 Z" fill="#2b2b2b" stroke="#5c5e60" stroke-width="1"></path><path d="M2.5 6.5 H6.5" stroke="#7a7c7e" stroke-width="1"></path></svg>
<svg style="left:61px;top:624px" width="9" height="11" viewBox="0 0 9 11"><path d="M0.5 10.5 V4.3 L4.5 0.6 L8.5 4.3 V10.5 Z" fill="#2b2b2b" stroke="#5c5e60" stroke-width="1"></path><path d="M2.5 6.5 H6.5" stroke="#7a7c7e" stroke-width="1"></path></svg>
<svg style="left:61px;top:646px" width="9" height="11" viewBox="0 0 9 11"><path d="M0.5 10.5 V4.3 L4.5 0.6 L8.5 4.3 V10.5 Z" fill="#2b2b2b" stroke="#5c5e60" stroke-width="1"></path><path d="M2.5 6.5 H6.5" stroke="#7a7c7e" stroke-width="1"></path></svg>
<svg style="left:61px;top:668px" width="9" height="11" viewBox="0 0 9 11"><path d="M0.5 10.5 V4.3 L4.5 0.6 L8.5 4.3 V10.5 Z" fill="#2b2b2b" stroke="#5c5e60" stroke-width="1"></path><path d="M2.5 6.5 H6.5" stroke="#7a7c7e" stroke-width="1"></path></svg>
<svg style="left:61px;top:690px" width="9" height="11" viewBox="0 0 9 11"><path d="M0.5 10.5 V4.3 L4.5 0.6 L8.5 4.3 V10.5 Z" fill="#2b2b2b" stroke="#5c5e60" stroke-width="1"></path><path d="M2.5 6.5 H6.5" stroke="#7a7c7e" stroke-width="1"></path></svg>
<svg style="left:61px;top:142px" width="9" height="11" viewBox="0 0 9 11"><path d="M0.5 0.5 V6.7 L4.5 10.4 L8.5 6.7 V0.5 Z" fill="#2b2b2b" stroke="#5c5e60" stroke-width="1"></path><path d="M2.5 4.5 H6.5" stroke="#7a7c7e" stroke-width="1"></path></svg>
<svg style="left:61px;top:164px" width="9" height="11" viewBox="0 0 9 11"><path d="M0.5 0.5 V6.7 L4.5 10.4 L8.5 6.7 V0.5 Z" fill="#2b2b2b" stroke="#5c5e60" stroke-width="1"></path><path d="M2.5 4.5 H6.5" stroke="#7a7c7e" stroke-width="1"></path></svg>
<svg style="left:61px;top:230px" width="9" height="11" viewBox="0 0 9 11"><path d="M0.5 0.5 V6.7 L4.5 10.4 L8.5 6.7 V0.5 Z" fill="#2b2b2b" stroke="#5c5e60" stroke-width="1"></path><path d="M2.5 4.5 H6.5" stroke="#7a7c7e" stroke-width="1"></path></svg>
<svg style="left:61px;top:340px" width="9" height="11" viewBox="0 0 9 11"><path d="M0.5 0.5 V6.7 L4.5 10.4 L8.5 6.7 V0.5 Z" fill="#2b2b2b" stroke="#5c5e60" stroke-width="1"></path><path d="M2.5 4.5 H6.5" stroke="#7a7c7e" stroke-width="1"></path></svg>
<svg style="left:61px;top:362px" width="9" height="11" viewBox="0 0 9 11"><path d="M0.5 0.5 V6.7 L4.5 10.4 L8.5 6.7 V0.5 Z" fill="#2b2b2b" stroke="#5c5e60" stroke-width="1"></path><path d="M2.5 4.5 H6.5" stroke="#7a7c7e" stroke-width="1"></path></svg>
<svg style="left:61px;top:428px" width="9" height="11" viewBox="0 0 9 11"><path d="M0.5 0.5 V6.7 L4.5 10.4 L8.5 6.7 V0.5 Z" fill="#2b2b2b" stroke="#5c5e60" stroke-width="1"></path><path d="M2.5 4.5 H6.5" stroke="#7a7c7e" stroke-width="1"></path></svg>
<svg style="left:61px;top:450px" width="9" height="11" viewBox="0 0 9 11"><path d="M0.5 0.5 V6.7 L4.5 10.4 L8.5 6.7 V0.5 Z" fill="#323232" stroke="#5c5e60" stroke-width="1"></path><path d="M2.5 4.5 H6.5" stroke="#7a7c7e" stroke-width="1"></path></svg>
<svg style="left:61px;top:494px" width="9" height="11" viewBox="0 0 9 11"><path d="M0.5 0.5 V6.7 L4.5 10.4 L8.5 6.7 V0.5 Z" fill="#2b2b2b" stroke="#5c5e60" stroke-width="1"></path><path d="M2.5 4.5 H6.5" stroke="#7a7c7e" stroke-width="1"></path></svg>
<span class="ln" style="left:-13px;top:4px;color:#606366">76</span>
<span class="code" style="left:167px;top:4px"><span class="k">"caseSensitiveCheck"</span><span class="o">: true,</span></span>
<span class="ln" style="left:-13px;top:26px;color:#606366">77</span>
<span class="code" style="left:167px;top:26px"><span class="k">"useNormalizedOHMUrl"</span><span class="o">: false</span></span>
<span class="ln" style="left:-13px;top:48px;color:#606366">78</span>
<span class="code" style="left:151px;top:48px">}</span>
<span class="ln" style="left:-13px;top:70px;color:#606366">79</span>
<span class="code" style="left:135px;top:70px">}</span>
<span class="ln" style="left:-13px;top:92px;color:#606366">80</span>
<span class="code" style="left:119px;top:92px">}</span>
<span class="ln" style="left:-13px;top:114px;color:#606366">81</span>
<span class="code" style="left:103px;top:114px">]<span class="o">,</span></span>
<span class="ln" style="left:-13px;top:136px;color:#606366">82</span>
<span class="code" style="left:103px;top:136px"><span class="k">"buildModeSet"</span><span class="o">: </span>[</span>
<span class="ln" style="left:-13px;top:158px;color:#606366">83</span>
<span class="code" style="left:119px;top:158px">{</span>
<span class="ln" style="left:-13px;top:180px;color:#606366">84</span>
<span class="code" style="left:135px;top:180px"><span class="k">"name"</span><span class="o">: </span><span class="s">"debug"</span><span class="o">,</span></span>
<span class="ln" style="left:-13px;top:202px;color:#606366">85</span>
<span class="code" style="left:119px;top:202px">}<span class="o">,</span></span>
<span class="ln" style="left:-13px;top:224px;color:#606366">86</span>
<span class="code" style="left:119px;top:224px">{</span>
<span class="ln" style="left:-13px;top:246px;color:#606366">87</span>
<span class="code" style="left:135px;top:246px"><span class="k">"name"</span><span class="o">: </span><span class="s">"release"</span></span>
<span class="ln" style="left:-13px;top:268px;color:#606366">88</span>
<span class="code" style="left:119px;top:268px">}</span>
<span class="ln" style="left:-13px;top:290px;color:#606366">89</span>
<span class="code" style="left:103px;top:290px">]</span>
<span class="ln" style="left:-13px;top:312px;color:#606366">90</span>
<span class="code" style="left:87px;top:312px">}<span class="o">,</span></span>
<span class="ln" style="left:-13px;top:334px;color:#606366">91</span>
<span class="code" style="left:87px;top:334px"><span class="k">"modules"</span><span class="o">: </span>[</span>
<span class="ln" style="left:-13px;top:356px;color:#606366">92</span>
<span class="code" style="left:103px;top:356px">{</span>
<span class="ln" style="left:-13px;top:378px;color:#606366">93</span>
<span class="code" style="left:119px;top:378px"><span class="k">"name"</span><span class="o">: </span><span class="s">"entry"</span><span class="o">,</span></span>
<span class="ln" style="left:-13px;top:400px;color:#606366">94</span>
<span class="code" style="left:119px;top:400px"><span class="k">"srcPath"</span><span class="o">: </span><span class="s">"./entry"</span><span class="o">,</span></span>
<span class="ln" style="left:-13px;top:422px;color:#606366">95</span>
<span class="code" style="left:119px;top:422px"><span class="k">"targets"</span><span class="o">: </span>[</span>
<span class="ln" style="left:-13px;top:444px;color:#a4a3a3">96</span>
<span class="code" style="left:135px;top:444px"><span style="background:#3b514d;color:#ffef28;display:inline-block;height:22px">{</span></span>
<span class="ln" style="left:-13px;top:466px;color:#606366">97</span>
<span class="code" style="left:151px;top:466px"><span class="k">"name"</span><span class="o">: </span><span class="s">"default"</span><span class="o">,</span></span>
<span class="ln" style="left:-13px;top:488px;color:#606366">98</span>
<span class="code" style="left:151px;top:488px"><span class="k">"applyToProducts"</span><span class="o">: </span>[<span class="c">//</span><span class="c cj">建构建的产物都依赖在</span><span class="c">hap</span><span class="c cj">包，同样的如果出现</span><span class="c">hsp</span><span class="c cj">也需要进行依赖，</span><span class="c">hsp</span><span class="c cj">需要和主包一样有相同的配置</span></span>
<span class="ln" style="left:-13px;top:510px;color:#606366">99</span>
<span class="code" style="left:167px;top:510px"><span class="s">"default"</span><span class="o">,</span></span>
<span class="ln" style="left:-13px;top:532px;color:#606366">100</span>
<span class="code" style="left:167px;top:532px"><span class="s">"products_debug"</span><span class="o">,</span></span>
<span class="ln" style="left:-13px;top:554px;color:#606366">101</span>
<span class="code" style="left:167px;top:554px"><span class="s">"products_release"</span></span>
<span class="ln" style="left:-13px;top:576px;color:#606366">102</span>
<span class="code" style="left:151px;top:576px">]</span>
<span class="ln" style="left:-13px;top:598px;color:#606366">103</span>
<span class="code" style="left:135px;top:598px"><span style="background:#3b514d;color:#ffef28;display:inline-block;height:22px">}</span></span>
<span class="ln" style="left:-13px;top:620px;color:#606366">104</span>
<span class="code" style="left:119px;top:620px">]</span>
<span class="ln" style="left:-13px;top:642px;color:#606366">105</span>
<span class="code" style="left:103px;top:642px">}</span>
<span class="ln" style="left:-13px;top:664px;color:#606366">106</span>
<span class="code" style="left:87px;top:664px">]</span>
<span class="ln" style="left:-13px;top:686px;color:#606366">107</span>
<span class="code" style="left:71px;top:686px">}</span>
<div class="a" style="left:143px;top:445px;width:2px;height:18px;background:#bbbbbb;"></div>
<div class="a" style="left:1137px;top:557px;width:8px;height:259px;background:#4e4e4e;"></div>
</div>
<div class="a" style="left:271px;top:902px;width:1147px;height:1px;background:#4b4b4b;"></div>
<div class="a" style="left:271px;top:903px;width:1147px;height:24px;background:#313335;"></div>
<span class="t " style="left: 281px; top: 905px; font-size: 13px; color: rgb(187, 187, 187); letter-spacing: 0.143px;">modules</span>
<span class="t " style="left: 355px; top: 905px; font-size: 13px; color: rgb(187, 187, 187); letter-spacing: 0px;">0</span>
<span class="t " style="left: 386px; top: 905px; font-size: 13px; color: rgb(187, 187, 187); letter-spacing: 0.143px;">targets</span>
<span class="t " style="left: 451px; top: 905px; font-size: 13px; color: rgb(187, 187, 187); letter-spacing: 0px;">0</span>
<svg style="left:342px;top:910px" width="5" height="9" viewBox="0 0 5 9"><path d="M0.8 0.8 L4 4.5 L0.8 8.2" fill="none" stroke="#6e7072" stroke-width="1"></path></svg>
<svg style="left:373px;top:910px" width="5" height="9" viewBox="0 0 5 9"><path d="M0.8 0.8 L4 4.5 L0.8 8.2" fill="none" stroke="#6e7072" stroke-width="1"></path></svg>
<svg style="left:438px;top:910px" width="5" height="9" viewBox="0 0 5 9"><path d="M0.8 0.8 L4 4.5 L0.8 8.2" fill="none" stroke="#6e7072" stroke-width="1"></path></svg>
<div class="a" style="left:1417px;top:58px;width:1px;height:869px;background:#323232;"></div>
<div class="a" style="left:1418px;top:58px;width:480px;height:869px;background:#3c3f41;"></div>
<div class="a" style="left:1418px;top:84px;width:480px;height:1px;background:#323232;"></div>
<svg style="left:1850.7px;top:63.7px" width="14.6" height="14.6" viewBox="0 0 14.6 14.6"><polygon points="5.71,2.92 6.10,1.12 8.50,1.12 8.89,2.92 10.30,3.73 12.05,3.17 13.26,5.25 11.89,6.49 11.89,8.11 13.26,9.35 12.05,11.43 10.30,10.87 8.89,11.68 8.50,13.48 6.10,13.48 5.71,11.68 4.30,10.87 2.55,11.43 1.34,9.35 2.71,8.11 2.71,6.49 1.34,5.25 2.55,3.17 4.30,3.73" fill="#afb1b3" stroke="#afb1b3" stroke-width="0.8" stroke-linejoin="round"></polygon><circle cx="7.3" cy="7.3" r="2.08" fill="#3c3f41"></circle></svg>
<div class="a" style="left:1878.0px;top:70px;width:12px;height:2px;background:#afb1b3;"></div>
<span class="t " style="left: 1598px; top: 351px; font-size: 13px; color: rgb(127, 129, 132); letter-spacing: -0.15px;">Suggestions, events,</span>
<span class="t " style="left: 1577px; top: 372px; font-size: 13px; color: rgb(127, 129, 132); letter-spacing: 0.185px;">and errors will appear here</span>
<div class="a" style="left:1898px;top:58px;width:22px;height:962px;background:#3c3f41;"></div>
<div class="a" style="left:1897px;top:58px;width:1px;height:938px;background:#323232;"></div>
<div class="a" style="left:1898px;top:289px;width:22px;height:109px;background:#2b2d2f;"></div>
<svg style="left:1901.5px;top:71.5px" width="13" height="13" viewBox="0 0 13 13"><circle cx="6.5" cy="6.5" r="5.6" fill="none" stroke="#afb1b3" stroke-width="1.2"></circle><circle cx="6.5" cy="0.7" r="1.3" fill="#afb1b3"></circle><circle cx="1.3" cy="9.6" r="1.3" fill="#afb1b3"></circle><circle cx="11.7" cy="9.6" r="1.3" fill="#afb1b3"></circle><rect x="3.6" y="3.6" width="2.4" height="2.4" fill="#afb1b3"></rect><rect x="7" y="3.6" width="2.4" height="2.4" fill="#afb1b3"></rect><rect x="3.6" y="7" width="2.4" height="2.4" fill="#afb1b3"></rect><rect x="7" y="7" width="2.4" height="2.4" fill="#afb1b3"></rect></svg>
<span class="vt" style="left: 1918px; top: 89px; font-size: 12px; color: rgb(187, 187, 187); transform: rotate(90deg); letter-spacing: -0.75px;">应用与元服务体检</span>
<svg style="left:1902px;top:204px" width="13" height="13" viewBox="0 0 13 13"><path d="M6.5 0.5 L12 3.5 V9.5 L6.5 12.5 L1 9.5 V3.5 Z" fill="#afb1b3"></path><path d="M6.5 3 V10 M4 4.5 V8.5 M9 5 H7.5" stroke="#3c3f41" stroke-width="1.2"></path></svg>
<span class="vt" style="left: 1918px; top: 221px; font-size: 11px; color: rgb(187, 187, 187); transform: rotate(90deg); letter-spacing: 0.444px;">CodeGenie</span>
<svg style="left:1902px;top:301px" width="13" height="13" viewBox="0 0 13 13"><path d="M6.5 0.8 Q10.6 1.2 10.6 5.5 V8.2 L12.2 10.2 H0.8 L2.4 8.2 V5.5 Q2.4 1.2 6.5 0.8 Z" fill="#c7c9cb"></path><path d="M5 11.2 H8 Q6.5 13.4 5 11.2 Z" fill="#c7c9cb"></path></svg>
<span class="vt" style="left: 1918px; top: 318px; font-size: 11px; color: rgb(255, 255, 255); transform: rotate(90deg); letter-spacing: 0.615px;">Notifications</span>
<svg style="left:1902px;top:408px" width="13" height="10" viewBox="0 0 13 10"><path d="M0.5 5 Q6.5 -2.5 12.5 5 Q6.5 12.5 0.5 5 Z" fill="#afb1b3"></path><circle cx="6.5" cy="5" r="2.4" fill="#3c3f41"></circle><circle cx="6.5" cy="5" r="1.1" fill="#afb1b3"></circle></svg>
<span class="vt" style="left: 1918px; top: 423px; font-size: 12px; color: rgb(187, 187, 187); transform: rotate(90deg); letter-spacing: -0.667px;">预览器</span>
<svg style="left:1904px;top:792px" width="9" height="11" viewBox="0 0 9 11"><rect x="0.6" y="0.6" width="7.8" height="9.8" rx="1" fill="none" stroke="#afb1b3" stroke-width="1.2"></rect></svg>
<span class="vt" style="left: 1918px; top: 807px; font-size: 11px; color: rgb(187, 187, 187); transform: rotate(90deg); letter-spacing: 0.316px;">Device File Browser</span>
<svg style="left:1902px;top:934px" width="14" height="16" viewBox="0 0 14 16"><rect x="0.6" y="2.6" width="12.8" height="12.8" rx="1.5" fill="none" stroke="#afb1b3" stroke-width="1.1"></rect><path d="M1.5 0.8 H12.5" stroke="#afb1b3" stroke-width="1.1"></path><text x="3.6" y="13" font-family="Liberation Sans" font-size="8.5" fill="#afb1b3">A</text></svg>
<div class="a" style="left:1898px;top:952px;width:22px;height:68px;overflow:hidden"><span class="vt" style="left: 20px; top: 1px; font-size: 12px; color: rgb(187, 187, 187); transform: rotate(90deg); letter-spacing: 0px;">单词本</span></div>
<div class="a" style="left:22px;top:926px;width:1876px;height:1px;background:#323232;"></div>
<div class="a" style="left:22px;top:927px;width:1876px;height:27px;background:#3c3f41;"></div>
<span class="t " style="left: 28px; top: 931px; font-size: 12px; color: rgb(187, 187, 187); letter-spacing: 0px;">构建:</span>
<span class="t " style="left: 74px; top: 931px; font-size: 12px; color: rgb(187, 187, 187); letter-spacing: 0px;">同步</span>
<svg style="left:105px;top:936px" width="8" height="8" viewBox="0 0 8 8"><path d="M0.5 0.5 L7.5 7.5 M7.5 0.5 L0.5 7.5" stroke="#6e6e6e" stroke-width="1"></path></svg>
<div class="a" style="left:62px;top:951px;width:62px;height:3px;background:#6b6e70;border-radius:1.5px"></div>
<svg style="left:1850.7px;top:932.7px" width="14.6" height="14.6" viewBox="0 0 14.6 14.6"><polygon points="5.71,2.92 6.10,1.12 8.50,1.12 8.89,2.92 10.30,3.73 12.05,3.17 13.26,5.25 11.89,6.49 11.89,8.11 13.26,9.35 12.05,11.43 10.30,10.87 8.89,11.68 8.50,13.48 6.10,13.48 5.71,11.68 4.30,10.87 2.55,11.43 1.34,9.35 2.71,8.11 2.71,6.49 1.34,5.25 2.55,3.17 4.30,3.73" fill="#afb1b3" stroke="#afb1b3" stroke-width="0.8" stroke-linejoin="round"></polygon><circle cx="7.3" cy="7.3" r="2.08" fill="#3c3f41"></circle></svg>
<div class="a" style="left:1878.0px;top:939px;width:12px;height:2px;background:#afb1b3;"></div>
<div class="a" style="left:22px;top:953px;width:1876px;height:1px;background:#323232;"></div>
<div class="a" style="left:22px;top:954px;width:28px;height:42px;background:#3c3f41;"></div>
<div class="a" style="left:50px;top:954px;width:1px;height:42px;background:#323232;"></div>
<svg style="left:33px;top:984px" width="8" height="6" viewBox="0 0 8 6"><path d="M0.5 0.5 L3 3 L0.5 5.5 M4.5 0.5 L7 3 L4.5 5.5" fill="none" stroke="#9da0a2" stroke-width="1"></path></svg>
<div class="a" style="left:51px;top:954px;width:302px;height:42px;background:#3c3f41;"></div>
<div class="a" style="left:343px;top:955px;width:8px;height:26px;background:#595b5d;"></div>
<svg style="left:55px;top:958px" width="13" height="11" viewBox="0 0 13 11"><path d="M1 6 L4.6 9.6 L12 1.4" fill="none" stroke="#59a869" stroke-width="2.6"></path></svg>
<div class="a" style="left:72px;top:954px;width:280px;height:22px;overflow:hidden"><span class="t b" style="left: 0px; top: 1px; font-size: 13px; color: rgb(187, 187, 187); letter-spacing: 0.167px;">MultiBuildDemo [Ohpm Install]:</span><span class="t" style="left: 203px; top: 1px; font-size: 12.5px; color: rgb(187, 187, 187); letter-spacing: 0px;">成功的 在2025</span></div>
<div class="a" style="left:52px;top:987px;width:221px;height:7px;background:#595b5d;"></div>
<div class="a" style="left:51px;top:994px;width:302px;height:2px;background:#4b6eaf;"></div>
<div class="a" style="left:353px;top:954px;width:1516px;height:42px;background:#2b2b2b;"></div>
<div class="a" style="left:366px;top:987px;width:1503px;height:8px;background:#4e4e4e;"></div>
<div class="a" style="left:1869px;top:954px;width:28px;height:42px;background:#3c3f41;"></div>
<div class="a" style="left:1860px;top:969px;width:8px;height:18px;background:#4e4e4e;"></div>
<svg style="left:1877px;top:963px" width="13" height="13" viewBox="0 0 13 13"><path d="M0 1 H12 M0 5.5 H9.5 Q12.5 5.5 12.5 8 Q12.5 10.5 9.5 10.5 H6" fill="none" stroke="#afb1b3" stroke-width="1.5"></path><path d="M7.5 8 L5 10.5 L7.5 13" fill="none" stroke="#afb1b3" stroke-width="1.5"></path><path d="M0 10.5 H3" stroke="#afb1b3" stroke-width="1.5"></path></svg>
<div class="a" style="left:0px;top:996px;width:1920px;height:24px;background:#3c3f41;"></div>
<div class="a" style="left:0px;top:1020px;width:1920px;height:1px;background:#464849;"></div>
<div class="a" style="left:330px;top:996px;width:57px;height:24px;background:#2d2f30;"></div>
<span class="t " style="left: 50px; top: 999px; font-size: 11.5px; color: rgb(187, 187, 187); letter-spacing: -0.5px;">版本控制</span>
<span class="t " style="left: 138px; top: 999px; font-size: 11.5px; color: rgb(187, 187, 187); letter-spacing: 0.167px;">Operation Analyzer</span>
<span class="t " style="left: 282px; top: 999px; font-size: 11.5px; color: rgb(187, 187, 187); letter-spacing: 0.25px;">Profiler</span>
<span class="t " style="left: 357px; top: 999px; font-size: 11.5px; color: rgb(255, 255, 255); letter-spacing: -0.5px;">构建</span>
<span class="t " style="left: 414px; top: 999px; font-size: 11.5px; color: rgb(187, 187, 187); letter-spacing: -0.5px;">TODO</span>
<span class="t " style="left: 482px; top: 999px; font-size: 11.5px; color: rgb(187, 187, 187); letter-spacing: -0.5px;">日志</span>
<span class="t " style="left: 539px; top: 999px; font-size: 11.5px; color: rgb(187, 187, 187); letter-spacing: -0.5px;">问题</span>
<span class="t " style="left: 596px; top: 999px; font-size: 11.5px; color: rgb(187, 187, 187); letter-spacing: -0.5px;">终端</span>
<span class="t " style="left: 653px; top: 999px; font-size: 11.5px; color: rgb(187, 187, 187); letter-spacing: -0.5px;">服务</span>
<span class="t " style="left: 712px; top: 999px; font-size: 11.5px; color: rgb(187, 187, 187); letter-spacing: 0.091px;">Code Linter</span>
<span class="t " style="left: 813px; top: 999px; font-size: 11.5px; color: rgb(187, 187, 187); letter-spacing: 0.133px;">ArkUI Inspector</span>
<svg style="left:35px;top:1003px" width="9" height="12" viewBox="0 0 9 12"><path d="M2 1 V11 M2 8.4 Q7 8 7 3.6" fill="none" stroke="#afb1b3" stroke-width="1.5"></path><circle cx="2" cy="1.8" r="1.8" fill="#afb1b3"></circle><circle cx="2" cy="10.2" r="1.8" fill="#afb1b3"></circle><circle cx="7" cy="3" r="1.8" fill="#afb1b3"></circle></svg>
<svg style="left:119px;top:1002px" width="14" height="12" viewBox="0 0 14 12"><path d="M1 0 V11 H14" fill="none" stroke="#afb1b3" stroke-width="1.4"></path><path d="M3.4 8.4 L6.4 3.6 L8.8 6.2 L12.6 1.8" fill="none" stroke="#afb1b3" stroke-width="1.3"></path></svg>
<svg style="left:263px;top:1002px" width="14" height="13" viewBox="0 0 14 13"><path d="M0.4 4.6 L13.6 0.4 L10.4 12.6 L8 7.4 Z" fill="#afb1b3"></path><path d="M4.4 6.6 L7 8.2 L5 12 Z" fill="#afb1b3"></path><path d="M13.6 0.4 L7.4 7.8" stroke="#3c3f41" stroke-width="0.9"></path></svg>
<svg style="left:339px;top:1002px" width="14" height="13" viewBox="0 0 14 13"><path d="M1 4.4 L5 0.6 L8.6 3.4 L7 5 L13.4 11.4 L11.8 13 L5.4 6.6 L3.6 7.6 Z" fill="#c4c6c8"></path></svg>
<svg style="left:399px;top:1003px" width="11" height="10" viewBox="0 0 11 10"><path d="M0 1.2 H2.2 M0 5 H2.2 M0 8.8 H2.2" stroke="#afb1b3" stroke-width="2"></path><path d="M3.6 1.2 H11 M3.6 5 H11 M3.6 8.8 H11" stroke="#afb1b3" stroke-width="1.8"></path></svg>
<svg style="left:465px;top:1002px" width="13" height="13" viewBox="0 0 13 13"><path d="M0.5 1.6 H12.5 V12.5 H0.5 Z" fill="#afb1b3"></path><path d="M3 0 V3 M10 0 V3" stroke="#afb1b3" stroke-width="1.6"></path><path d="M2.6 5.4 H10.4 M2.6 7.8 H10.4 M2.6 10.2 H7.4" stroke="#3c3f41" stroke-width="1.1"></path></svg>
<svg style="left:522px;top:1002px" width="12" height="12" viewBox="0 0 12 12"><circle cx="6" cy="6" r="5.6" fill="#afb1b3"></circle><path d="M6 2.6 V6.8" stroke="#3c3f41" stroke-width="1.6"></path><circle cx="6" cy="8.9" r="0.95" fill="#3c3f41"></circle></svg>
<svg style="left:580px;top:1002px" width="12" height="11" viewBox="0 0 12 11"><rect x="0" y="0" width="12" height="11" fill="#afb1b3"></rect><path d="M2.2 2.6 L5 5.2 L2.2 7.8" fill="none" stroke="#3c3f41" stroke-width="1.2"></path><path d="M5.8 8.4 H9.6" stroke="#3c3f41" stroke-width="1.2"></path></svg>
<svg style="left:636px;top:1002px" width="13" height="12" viewBox="0 0 13 12"><path d="M3.4 0.2 H9.6 L12.8 6 L9.6 11.8 H3.4 L0.2 6 Z" fill="#afb1b3"></path><path d="M5 3.2 L9.4 6 L5 8.8 Z" fill="#3c3f41"></path></svg>
<svg style="left:695px;top:1001px" width="13" height="14" viewBox="0 0 13 14"><circle cx="6" cy="6" r="5.2" fill="#afb1b3"></circle><path d="M9.8 9.8 L12.6 13" stroke="#afb1b3" stroke-width="2"></path><path d="M4.6 3.8 L2.6 6 L4.6 8.2 M7.4 3.8 L9.4 6 L7.4 8.2 M6.6 3.4 L5.4 8.6" fill="none" stroke="#3c3f41" stroke-width="0.9"></path></svg>
<svg style="left:796px;top:1002px" width="13" height="12" viewBox="0 0 13 12"><rect x="0" y="0" width="13" height="3" fill="#afb1b3"></rect><rect x="0" y="4.4" width="3.6" height="7.6" fill="#afb1b3"></rect><rect x="5" y="4.4" width="8" height="3" fill="#afb1b3"></rect><rect x="5" y="8.8" width="8" height="3.2" fill="#afb1b3"></rect></svg>
<div class="a" style="left:0px;top:1021px;width:1920px;height:19px;background:#3c3f41;"></div>
<svg style="left:11px;top:1024px" width="12" height="12" viewBox="0 0 12 12"><rect x="0.5" y="2.5" width="9" height="9" fill="none" stroke="#afb1b3" stroke-width="1"></rect><path d="M2.5 0.5 H11.5 V9.5" fill="none" stroke="#afb1b3" stroke-width="1"></path></svg>
<span class="t " style="left: 1540px; top: 1020px; font-size: 13px; color: rgb(187, 187, 187); letter-spacing: -0.4px;">96:10</span>
<span class="t " style="left: 1607px; top: 1020px; font-size: 13px; color: rgb(187, 187, 187); letter-spacing: -1.5px;">CRLF</span>
<span class="t " style="left: 1647px; top: 1020px; font-size: 13px; color: rgb(187, 187, 187); letter-spacing: -0.6px;">UTF-8</span>
<span class="t " style="left: 1693px; top: 1020px; font-size: 13px; color: rgb(187, 187, 187); letter-spacing: 0.188px;">JSON: ohos-project-build-profile</span>
<svg style="left:1492px;top:1024px" width="13" height="13" viewBox="0 0 13 13"><path d="M6.4 0 L12.4 3 V9.4 L6.4 12.6 L0.4 9.4 V3 Z" fill="#f2f2f2"></path><path d="M4.6 3.4 Q2.6 6.2 4.6 9.2 M8 4.6 H10 M9.6 3.6 Q7 3 7 6.3 Q7 9.6 9.8 9 V6.6 H8.6" fill="none" stroke="#3c3f41" stroke-width="1.3"></path></svg>
<svg style="left:1516px;top:1024px" width="12" height="12" viewBox="0 0 12 12"><circle cx="6" cy="6" r="6" fill="#2e9b32"></circle></svg>
<svg style="left:1583px;top:1024px" width="13" height="13" viewBox="0 0 13 13"><path d="M11.2 3.2 A5.4 5.4 0 0 0 2 3.6" fill="none" stroke="#ea4335" stroke-width="2.2"></path><path d="M2 3.6 A5.4 5.4 0 0 0 2 9.4" fill="none" stroke="#fbbc05" stroke-width="2.2"></path><path d="M2 9.4 A5.4 5.4 0 0 0 10.6 10.4" fill="none" stroke="#34a853" stroke-width="2.2"></path><path d="M10.6 10.4 A5.4 5.4 0 0 0 12 6.5 H6.6" fill="none" stroke="#4285f4" stroke-width="2.2"></path></svg>
<svg style="left:1895px;top:1024px" width="12" height="11" viewBox="0 0 12 11"><rect x="4" y="5" width="7.4" height="6" fill="#afb1b3"></rect><path d="M1 5 V3.2 Q1 0.8 3.2 0.8 Q5.4 0.8 5.4 3.2 V5" fill="none" stroke="#afb1b3" stroke-width="1.5"></path></svg>
<div class="a" style="left:1210px;top:55px;width:465px;height:286px;background:#3c3f41;border:1px solid #5e6060"></div>
<span class="t " style="left: 1216px; top: 65px; font-size: 14px; color: rgb(187, 187, 187); font-weight: bold; letter-spacing: 0.125px;">Product:</span>
<div class="a" style="left:1288px;top:63px;width:134px;height:24px;background:#3c3f41;border:1px solid #646464;border-radius:3px"></div>
<span class="t " style="left: 1294px; top: 66px; font-size: 13px; color: rgb(187, 187, 187); letter-spacing: 0.143px;">default</span>
<svg style="left:1406px;top:72.5px" width="9" height="5" viewBox="0 0 9 5"><path d="M0 0 H9 L4.5 5 Z" fill="#9a9da0"></path></svg>
<span class="t " style="left: 1435px; top: 65px; font-size: 14px; color: rgb(187, 187, 187); font-weight: bold; letter-spacing: 0.364px;">Build Mode:</span>
<div class="a" style="left:1532px;top:63px;width:134px;height:24px;background:#3c3f41;border:1px solid #646464;border-radius:3px"></div>
<span class="t " style="left: 1539px; top: 66px; font-size: 13px; color: rgb(187, 187, 187); letter-spacing: 0.111px;">&lt;Default&gt;</span>
<svg style="left:1650px;top:72.5px" width="9" height="5" viewBox="0 0 9 5"><path d="M0 0 H9 L4.5 5 Z" fill="#9a9da0"></path></svg>
<span class="t " style="left: 1216px; top: 94px; font-size: 13px; color: rgb(88, 157, 246); letter-spacing: 0.267px;">Get more information about product and target</span>
<span class="t " style="left: 1216px; top: 124px; font-size: 14px; color: rgb(187, 187, 187); font-weight: bold; letter-spacing: 0.5px;">Product Info</span>
<div class="a" style="left:1310px;top:134px;width:358px;height:1px;background:#505355;"></div>
<span class="t " style="left: 1252px; top: 152px; font-size: 12.5px; color: rgb(187, 187, 187); letter-spacing: 0.182px;">BundleName:</span>
<span class="t " style="left: 1346px; top: 152px; font-size: 12.5px; color: rgb(187, 187, 187); letter-spacing: 0.108px;">com.atomicservice.5765880207855284373</span>
<span class="t " style="left: 1252px; top: 174px; font-size: 12.5px; color: rgb(187, 187, 187); letter-spacing: 0.214px;">SigningConfig:</span>
<span class="t " style="left: 1346px; top: 174px; font-size: 12.5px; color: rgb(187, 187, 187); letter-spacing: 0.286px;">default</span>
<span class="t " style="left: 1216px; top: 204px; font-size: 14px; color: rgb(187, 187, 187); font-weight: bold; letter-spacing: 0.308px;">Target Select</span>
<div class="a" style="left:1313px;top:214px;width:355px;height:1px;background:#505355;"></div>
<div class="a" style="left:1216px;top:233px;width:452px;height:66px;background:#3c3f41;border:1px solid #2f3133"></div>
<div class="a" style="left:1217px;top:234px;width:450px;height:26px;background:#45494a;"></div>
<span class="t " style="left: 1219px; top: 238px; font-size: 13px; color: rgb(187, 187, 187); letter-spacing: 0.273px;">Module Name</span>
<span class="t " style="left: 1446px; top: 238px; font-size: 13px; color: rgb(187, 187, 187); letter-spacing: 0.462px;">Module Target</span>
<span class="t " style="left: 1226px; top: 269px; font-size: 13px; color: rgb(187, 187, 187); letter-spacing: 0px;">entry</span>
<div class="a" style="left:1226px;top:293px;width:206px;height:1px;background:#55585a;"></div>
<span class="t " style="left: 1448px; top: 269px; font-size: 13px; color: rgb(187, 187, 187); letter-spacing: 0.286px;">default</span>
<div class="a" style="left:1447px;top:293px;width:205px;height:1px;background:#55585a;"></div>
<svg style="left:1644px;top:277px" width="9" height="5" viewBox="0 0 9 5"><path d="M0 0 H9 L4.5 5 Z" fill="#9a9da0"></path></svg>
<div class="a" style="left:1506px;top:308px;width:72px;height:24px;background:#4c5052;border:1px solid #5e6060;border-radius:3px"></div>
<span class="t " style="left: 1523px; top: 311px; font-size: 13px; color: rgb(187, 187, 187); letter-spacing: -0.333px;">Cancel</span>
<div class="a" style="left:1594px;top:308px;width:72px;height:24px;background:#3c3f41;border:1px solid #5e6060;border-radius:3px"></div>
<span class="t " style="left: 1614px; top: 311px; font-size: 13px; color: rgb(119, 119, 119); letter-spacing: 0px;">Apply</span>
<div class="a" style="left:1196px;top:26px;width:44px;height:32px;background:transparent;border:2px solid #ed1c24"></div>
<div class="a" style="left:1283px;top:57px;width:146px;height:41px;background:transparent;border:2px solid #ed1c24"></div>
<span class="t " style="left:1180px;top:40px;font-size:19px;color:#ed1c24;">1</span>
<span class="t " style="left:1445px;top:75px;font-size:19px;color:#ed1c24;">2</span>
<div class="a" style="left:1730px;top:980px;width:190px;height:26px;background:#ffffff;border:1px solid #b8cff0;border-radius:2px"></div>
<div class="a" style="left:1720px;top:978px;width:28px;height:27px;background:#f4511e;border-radius:5px;transform:rotate(-13deg)"></div>
<svg style="left:1721px;top:979px" width="27" height="25" viewBox="0 0 27 25"><path d="M21.6 6.4 Q13 2.6 6.6 6.4 Q1.6 10 7.6 12.2 Q14.8 13.6 18.6 14.4 Q22 15.8 18 18.4 Q11.6 21.4 3.6 17.6" fill="none" stroke="#ffffff" stroke-width="3.4" stroke-linecap="round"></path></svg>
<span class="t " style="left: 1756px; top: 984px; font-size: 14px; color: rgb(13, 106, 224); font-weight: bold; letter-spacing: 0px;">英</span>
<svg style="left:1781px;top:987px" width="13" height="13" viewBox="0 0 13 13"><circle cx="3" cy="2.8" r="2.2" fill="#0d6ae0"></circle><path d="M9.2 5.4 H12 Q12.4 10 8.6 12 Q10 9.6 9.2 8.4 Z" fill="#0d6ae0"></path></svg>
<svg style="left:1805px;top:985px" width="12" height="16" viewBox="0 0 12 16"><rect x="3.4" y="0" width="5.2" height="9.6" rx="2.6" fill="#0d6ae0"></rect><path d="M0.8 6.6 Q0.8 12 6 12 Q11.2 12 11.2 6.6" fill="none" stroke="#0d6ae0" stroke-width="1.5"></path><path d="M6 12 V14.4 M3.6 15 H8.4" stroke="#0d6ae0" stroke-width="1.6"></path></svg>
<svg style="left:1828px;top:987px" width="15" height="12" viewBox="0 0 15 12"><rect x="0" y="0" width="15" height="12" rx="1.6" fill="#0d6ae0"></rect><path d="M2 3 H3.6 M5 3 H6.6 M8 3 H9.6 M11 3 H12.8 M2 5.8 H3.6 M5 5.8 H6.6 M8 5.8 H9.6 M11 5.8 H12.8 M3 8.8 H12" stroke="#ffffff" stroke-width="1.5"></path></svg>
<svg style="left:1851px;top:984px" width="19" height="17" viewBox="0 0 19 17"><defs><linearGradient id="lg2" x1="0" y1="0" x2="0.6" y2="1"><stop offset="0" stop-color="#ff5a3c"></stop><stop offset="0.5" stop-color="#b45ae0"></stop><stop offset="1" stop-color="#3f8cff"></stop></linearGradient></defs><path d="M4.6 3 L7 4.2 Q8 5.2 9 4.2 L11.4 3 L15.4 5.6 L13.8 8.4 L12.4 7.8 V15.4 Q8 16.6 3.6 15.4 V7.8 L2.2 8.4 L0.6 5.6 Z" fill="url(#lg2)"></path><circle cx="15.6" cy="2.8" r="2.8" fill="#f4462c"></circle></svg>
<svg style="left:1877px;top:987px" width="13" height="13" viewBox="0 0 13 13"><rect x="0" y="0" width="5.8" height="5.8" rx="1.6" fill="#0d6ae0"></rect><rect x="7.2" y="0" width="5.8" height="5.8" rx="1.6" fill="#0d6ae0"></rect><rect x="0" y="7.2" width="5.8" height="5.8" rx="1.6" fill="#0d6ae0"></rect><rect x="7.2" y="7.2" width="5.8" height="5.8" rx="1.6" fill="#0d6ae0"></rect></svg>
<svg style="left:1897px;top:982px" width="22" height="22" viewBox="0 0 22 22"><circle cx="10.6" cy="11.4" r="9.6" fill="#ffffff" stroke="#f3dcdc" stroke-width="0.8"></circle><path d="M3.4 5.6 L5.6 2.2 L8.2 4.4 M13 4.4 L15.6 2.2 L17.6 5.6" fill="#ffffff" stroke="#f3dcdc" stroke-width="0.6"></path><path d="M2.6 9.4 Q10.6 5.6 15.6 7.6 L15 11.6 Q9 11.2 4.4 13.6 Z" fill="#f0692a"></path><circle cx="6.6" cy="10.8" r="1" fill="#3a2a20"></circle><path d="M10.8 9.8 L13 10.6" stroke="#3a2a20" stroke-width="1"></path><path d="M6 14 Q8.4 16 11 14.4" fill="none" stroke="#3a2a20" stroke-width="1.1"></path><path d="M19 3.4 L20 6.2 L22.6 7.2 L20 8.2 L19 11 L18 8.2 L15.4 7.2 L18 6.2 Z" fill="#ffd83a"></path></svg>
</body></html>
